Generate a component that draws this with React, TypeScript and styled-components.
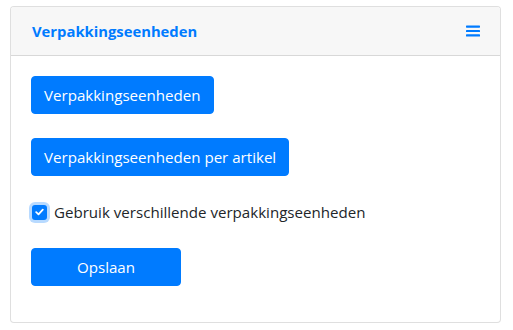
import React from "react";
import styled, { createGlobalStyle } from "styled-components";

const Global = createGlobalStyle`
  html, body { margin: 0; padding: 0; background: #fff; }
  body {
    font-family: "Open Sans", "Noto Sans", sans-serif;
    font-size: 15.1px;
    line-height: 1.5;
    color: #212529;
  }
  * { box-sizing: border-box; }
`;

const Page = styled.div`
  padding: 6px 12px 0 10px;
`;

const Card = styled.section`
  width: 491px;
  border: 1px solid rgba(0, 0, 0, 0.125);
  border-radius: 4px;
  background: #fff;
  overflow: hidden;
`;

const Header = styled.header`
  display: flex;
  align-items: center;
  justify-content: space-between;
  padding: 12px 20px 12px 21px;
  background: #f7f7f7;
  border-bottom: 1px solid rgba(0, 0, 0, 0.125);
`;

const Title = styled.h5`
  margin: 0;
  font-size: 14.8px;
  line-height: 24px;
  font-weight: 700;
  color: #007bff;
`;

const MenuButton = styled.button`
  display: flex;
  align-items: center;
  justify-content: center;
  border: 0;
  padding: 0;
  background: transparent;
  cursor: pointer;
  color: #007bff;
`;

const Body = styled.div`
  display: flex;
  flex-direction: column;
  align-items: flex-start;
  padding: 20px;
`;

const Button = styled.button<{ $width?: number; $mb?: number }>`
  display: inline-block;
  width: ${(p) => (p.$width ? `${p.$width}px` : "auto")};
  margin: 0 0 ${(p) => p.$mb ?? 24}px 0;
  padding: 6px 12px;
  border: 1px solid #007bff;
  border-radius: 4px;
  background: #007bff;
  color: #fff;
  font-family: inherit;
  font-size: 15.1px;
  line-height: 24px;
  text-align: center;
  cursor: pointer;
`;

const CheckRow = styled.label`
  display: flex;
  align-items: center;
  gap: 7px;
  margin: 0 0 24px 1px;
  line-height: 24px;
  cursor: pointer;
`;

const Box = styled.span`
  display: flex;
  align-items: center;
  justify-content: center;
  width: 15px;
  height: 15px;
  border-radius: 3px;
  background: #007bff;
  box-shadow: 0 0 0 3px rgba(0, 123, 255, 0.28);
  color: #fff;
`;

export default function App() {
  return (
    <>
      <Global />
      <Page>
        <Card>
          <Header>
            <Title>Verpakkingseenheden</Title>
            <MenuButton aria-label="menu">
              <svg width="14" height="12" viewBox="0 0 14 12">
                <rect x="0" y="0.5" width="14" height="2.2" rx="0.6" fill="currentColor" />
                <rect x="0" y="4.9" width="14" height="2.2" rx="0.6" fill="currentColor" />
                <rect x="0" y="9.3" width="14" height="2.2" rx="0.6" fill="currentColor" />
              </svg>
            </MenuButton>
          </Header>
          <Body>
            <Button>Verpakkingseenheden</Button>
            <Button>Verpakkingseenheden per artikel</Button>
            <CheckRow>
              <Box>
                <svg width="9" height="8" viewBox="0 0 9 8">
                  <path d="M1.2 4.2 L3.5 6.3 L7.8 1.6" fill="none" stroke="currentColor" strokeWidth="1.8" strokeLinecap="round" strokeLinejoin="round" />
                </svg>
              </Box>
              Gebruik verschillende verpakkingseenheden
            </CheckRow>
            <Button $width={150} $mb={16}>Opslaan</Button>
          </Body>
        </Card>
      </Page>
    </>
  );
}
